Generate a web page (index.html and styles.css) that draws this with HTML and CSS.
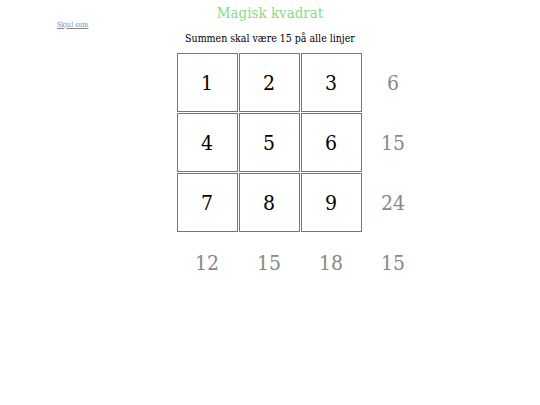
FILE: index.html
```html
<!DOCTYPE html>
<html lang="no">
<head>
<meta charset="utf-8">
<title>Magisk kvadrat</title>
<link rel="stylesheet" href="styles.css">
</head>
<body>
<div class="page">
  <h1 class="title">Magisk kvadrat</h1>
  <a class="toggle" href="#">Skjul sum</a>
  <p class="subtitle">Summen skal være 15 på alle linjer</p>
  <div class="grid">
    <div class="cell">1</div><div class="cell">2</div><div class="cell">3</div><div class="sum">6</div>
    <div class="cell">4</div><div class="cell">5</div><div class="cell">6</div><div class="sum">15</div>
    <div class="cell">7</div><div class="cell">8</div><div class="cell">9</div><div class="sum">24</div>
    <div class="sum">12</div><div class="sum">15</div><div class="sum">18</div><div class="sum">15</div>
  </div>
</div>
</body>
</html>
```
FILE: styles.css
```css
html, body {
  margin: 0;
  padding: 0;
  background: #fff;
}
body {
  font-family: "DejaVu Serif Condensed", "DejaVu Serif", serif;
  color: #000;
}
.page {
  position: relative;
  display: flex;
  flex-direction: column;
  align-items: center;
  padding-top: 4px;
}
.title {
  margin: 0;
  font-size: 15px;
  font-weight: normal;
  color: #86dc86;
  line-height: 18px;
}
.toggle {
  position: absolute;
  left: 57px;
  top: 21px;
  font-size: 7px;
  color: #888;
  text-decoration-color: #888;
}
.subtitle {
  margin: 9px 0 0 0;
  font-size: 10.5px;
  line-height: 14px;
}
.grid {
  margin-top: 8px;
  margin-left: 60px;
  display: grid;
  grid-template-columns: repeat(4, 61px);
  grid-auto-rows: 59px;
  gap: 1px;
}
.cell, .sum {
  display: flex;
  align-items: center;
  justify-content: center;
  font-size: 21px;
}
.cell {
  border: 1px solid #777;
}
.sum {
  color: #888;
}
```
